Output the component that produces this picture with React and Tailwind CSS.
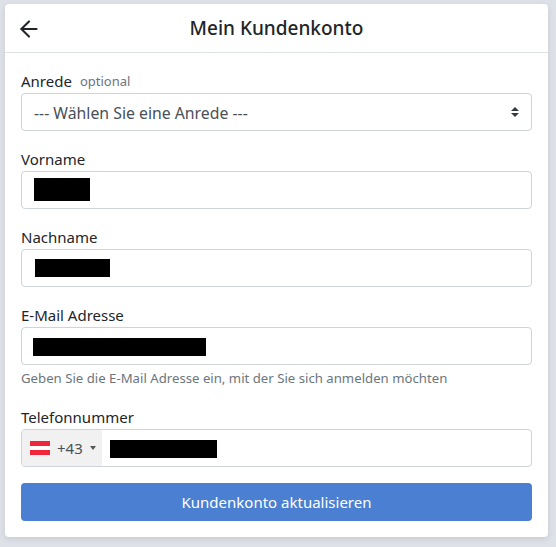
import { ArrowLeft } from 'lucide-react'

const FONT = { fontFamily: '"Noto Sans", sans-serif' }

function Field({ label, hint, children, help }) {
  return (
    <div>
      <div className="h-[22px] pb-[2px] flex items-center gap-2 text-[15px] leading-[20px] text-[#212529]">
        {label}
        {hint && <span className="text-[13px] text-[#6c757d]">{hint}</span>}
      </div>
      {children}
      {help && <p className="mt-[3px] mb-[1px] h-[20px] text-[13.2px] leading-[20px] text-[#6c757d]">{help}</p>}
    </div>
  )
}

// black redaction bars sit where the value text would be
function TextBox({ pad, width, height, top }) {
  return (
    <div className="h-[38px] rounded border border-[#ced4da] bg-white flex" style={{ paddingLeft: pad, paddingTop: top }}>
      <span className="bg-black block" style={{ width, height }} />
    </div>
  )
}

export default function App() {
  return (
    <div style={FONT} className="h-[547px] w-[556px] overflow-hidden bg-[#dee2e8] pt-1 pl-[5px]">
      <div className="w-[543px] h-[533px] rounded bg-white shadow-[0_2px_6px_rgba(0,0,0,0.1)]">
        <header className="relative h-[49px] border-b border-[#dee2e6] flex items-center justify-center">
          <ArrowLeft className="absolute left-[11px] top-[12px] text-[#212529]" size={26} strokeWidth={1.9} />
          <h1 className="text-[19px] font-medium text-[#212529]">Mein Kundenkonto</h1>
        </header>

        <form className="px-4 pt-[18px] flex flex-col">
          <Field label="Anrede" hint="optional">
            <div className="h-[38px] rounded border border-[#ced4da] flex items-center justify-between pl-3 pr-[11px] text-[15.8px] text-[#495057]">
              <span className="pt-[3px]">--- Wählen Sie eine Anrede ---</span>
              <svg width="10" height="12" viewBox="0 0 10 12" fill="#343a40">
                <path d="M5 1 9 5H1zM5 11 1 7h8z" />
              </svg>
            </div>
          </Field>
          <div className="mt-[18px]">
            <Field label="Vorname">
              <TextBox pad={12} width={56} height={23} top={6} />
            </Field>
          </div>
          <div className="mt-[18px]">
            <Field label="Nachname">
              <TextBox pad={13} width={75} height={18} top={9} />
            </Field>
          </div>
          <div className="mt-[18px]">
            <Field label="E-Mail Adresse" help="Geben Sie die E-Mail Adresse ein, mit der Sie sich anmelden möchten">
              <TextBox pad={11} width={173} height={18} top={10} />
            </Field>
          </div>
          <div className="mt-[18px]">
            <Field label="Telefonnummer">
              <div className="h-[38px] rounded border border-[#ced4da] flex overflow-hidden">
                <div className="w-[80px] bg-[#f1f1f1] flex items-center pl-[8px] text-[15px] text-[#495057]">
                  <span className="w-[20px] h-[14px] flex flex-col">
                    <span className="flex-1 bg-[#f0263c]" />
                    <span className="flex-1 bg-white" />
                    <span className="flex-1 bg-[#f0263c]" />
                  </span>
                  <span className="ml-[7px]">+43</span>
                  <span className="ml-[7px] w-0 h-0 border-x-[3px] border-x-transparent border-t-[4px] border-t-[#555]" />
                </div>
                <span className="ml-[8px] mt-[10px] w-[107px] h-[18px] bg-black" />
              </div>
            </Field>
          </div>
          <button type="button" className="mt-4 h-[38px] rounded bg-[#4a7fd1] text-white text-[15px]">
            Kundenkonto aktualisieren
          </button>
        </form>
      </div>
    </div>
  )
}
